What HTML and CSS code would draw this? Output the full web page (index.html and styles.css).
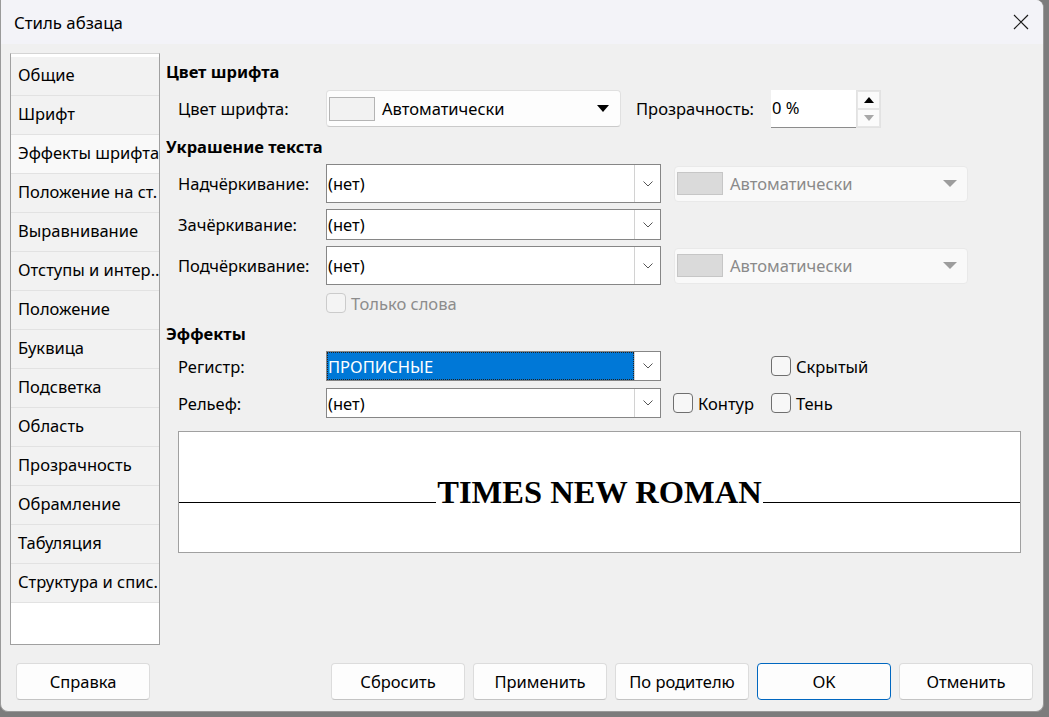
FILE: index.html
```html
<!DOCTYPE html>
<html lang="ru">
<head>
<meta charset="utf-8">
<title>Стиль абзаца</title>
<link rel="stylesheet" href="styles.css">
</head>
<body>
<div class="dialog">
  <div class="titlebar">
    <span class="title">Стиль абзаца</span>
    <svg class="close" width="16" height="16" viewBox="0 0 16 16"><path d="M1 1L15 15M15 1L1 15" stroke="#1a1a1a" stroke-width="1.2" fill="none"/></svg>
  </div>
  <div class="main">
    <div class="sidebar">
      <div class="tab">Общие</div>
      <div class="tab">Шрифт</div>
      <div class="tab active">Эффекты шрифта</div>
      <div class="tab">Положение на ст.</div>
      <div class="tab">Выравнивание</div>
      <div class="tab">Отступы и интер..</div>
      <div class="tab">Положение</div>
      <div class="tab">Буквица</div>
      <div class="tab">Подсветка</div>
      <div class="tab">Область</div>
      <div class="tab">Прозрачность</div>
      <div class="tab">Обрамление</div>
      <div class="tab">Табуляция</div>
      <div class="tab">Структура и спис.</div>
    </div>
    <div class="content">
      <div class="heading h1">Цвет шрифта</div>
      <div class="row r1">
        <span class="label">Цвет шрифта:</span>
        <div class="colorbox">
          <span class="swatch"></span>
          <span class="ctext">Автоматически</span>
          <span class="tri"></span>
        </div>
        <span class="label2">Прозрачность:</span>
        <div class="spin">
          <span class="spinval">0 %</span>
          <div class="spinbtns">
            <span class="sb up"><span class="tri-up"></span></span>
            <span class="sb down"><span class="tri-down"></span></span>
          </div>
        </div>
      </div>
      <div class="heading h2">Украшение текста</div>
      <div class="row r2">
        <span class="label">Надчёркивание:</span>
        <div class="combo"><span class="ctxt">(нет)</span><span class="cbtn"><svg width="10" height="6" viewBox="0 0 10 6"><path d="M0.5 0.5L5 5L9.5 0.5" stroke="#555" stroke-width="1" fill="none"/></svg></span></div>
        <div class="colorbox disabled">
          <span class="swatch"></span>
          <span class="ctext">Автоматически</span>
          <span class="tri"></span>
        </div>
      </div>
      <div class="row r3">
        <span class="label">Зачёркивание:</span>
        <div class="combo"><span class="ctxt">(нет)</span><span class="cbtn"><svg width="10" height="6" viewBox="0 0 10 6"><path d="M0.5 0.5L5 5L9.5 0.5" stroke="#555" stroke-width="1" fill="none"/></svg></span></div>
      </div>
      <div class="row r4">
        <span class="label">Подчёркивание:</span>
        <div class="combo"><span class="ctxt">(нет)</span><span class="cbtn"><svg width="10" height="6" viewBox="0 0 10 6"><path d="M0.5 0.5L5 5L9.5 0.5" stroke="#555" stroke-width="1" fill="none"/></svg></span></div>
        <div class="colorbox disabled">
          <span class="swatch"></span>
          <span class="ctext">Автоматически</span>
          <span class="tri"></span>
        </div>
      </div>
      <div class="row r5">
        <span class="label"></span>
        <span class="check disabled"><span class="box"></span><span class="ctl">Только слова</span></span>
      </div>
      <div class="heading h3">Эффекты</div>
      <div class="row r6">
        <span class="label">Регистр:</span>
        <div class="combo sel"><span class="ctxt">ПРОПИСНЫЕ</span><span class="cbtn"><svg width="10" height="6" viewBox="0 0 10 6"><path d="M0.5 0.5L5 5L9.5 0.5" stroke="#555" stroke-width="1" fill="none"/></svg></span></div>
        <span class="spacer1"></span>
        <span class="check"><span class="box"></span><span class="ctl">Скрытый</span></span>
      </div>
      <div class="row r7">
        <span class="label">Рельеф:</span>
        <div class="combo"><span class="ctxt">(нет)</span><span class="cbtn"><svg width="10" height="6" viewBox="0 0 10 6"><path d="M0.5 0.5L5 5L9.5 0.5" stroke="#555" stroke-width="1" fill="none"/></svg></span></div>
        <span class="check kontur"><span class="box"></span><span class="ctl">Контур</span></span>
        <span class="check ten"><span class="box"></span><span class="ctl">Тень</span></span>
      </div>
      <div class="preview">
        <div class="prow">
          <span class="pline"></span>
          <span class="ptext">TIMES NEW ROMAN</span>
          <span class="pline"></span>
        </div>
      </div>
    </div>
  </div>
  <div class="buttons">
    <button class="btn">Справка</button>
    <span class="grow"></span>
    <button class="btn">Сбросить</button>
    <button class="btn">Применить</button>
    <button class="btn">По родителю</button>
    <button class="btn ok">OK</button>
    <button class="btn">Отменить</button>
  </div>
</div>
</body>
</html>
```

FILE: styles.css
```css
* { box-sizing: border-box; }
html, body { margin: 0; padding: 0; }
body {
  background: #7c7c7c;
  width: 1049px;
  height: 717px;
  overflow: hidden;
  font-family: "Noto Sans", "Open Sans", sans-serif;
  font-size: 16.5px;
  color: #000;
}
.dialog {
  width: 1044px;
  height: 712px;
  background: #f0f0f0;
  border: 1px solid #9a9a9a;
  border-top: none;
  border-radius: 0 8px 8px 8px;
  overflow: hidden;
  display: flex;
  flex-direction: column;
}
.titlebar {
  height: 44px;
  flex: none;
  background: #f3f3f8;
  display: flex;
  align-items: center;
  padding: 0 14px 0 13px;
}
.title { font-size: 16.8px; flex: 1; }
.main {
  display: flex;
  padding: 9px 0 0 9px;
  height: 601px;
  flex: none;
}
.sidebar {
  width: 150px;
  height: 592px;
  background: #fff;
  border: 1px solid #a0a0a0;
  border-top-color: #d4d4d4;
  padding-top: 3px;
  overflow: hidden;
  flex: none;
}
.tab {
  height: 39px;
  line-height: 36px;
  padding-left: 7px;
  background: #f2f2f2;
  border-bottom: 1px solid #e2e2e2;
  white-space: nowrap;
  overflow: hidden;
}
.tab.active { background: #f9f9f9; }
.content {
  margin-left: 6px;
  flex: 1;
  display: flex;
  flex-direction: column;
}
.heading {
  font-weight: bold;
  line-height: 20px;
  height: 20px;
}
.h1 { margin-top: 9px; }
.h2 { margin-top: 10px; }
.h3 { margin-top: 11px; }
.row {
  display: flex;
  align-items: center;
  padding-left: 12px;
}
.label { width: 148px; flex: none; white-space: nowrap; }
.r1 { margin-top: 8px; height: 37px; }
.r2 { margin-top: 7px; height: 39px; }
.r3 { margin-top: 6px; height: 31px; }
.r4 { margin-top: 6px; height: 39px; }
.r5 { margin-top: 8px; height: 20px; }
.r6 { margin-top: 7px; height: 30px; }
.r7 { margin-top: 7px; height: 30px; }
.colorbox {
  width: 295px;
  height: 37px;
  margin-left: 0;
  flex: none;
  background: #fdfdfd;
  border: 1px solid #e0e0e0;
  border-bottom-color: #cacaca;
  border-radius: 4px;
  display: flex;
  align-items: center;
  padding-left: 2px;
}
.colorbox .swatch {
  width: 46px;
  height: 24px;
  border: 1px solid #b4b4b4;
  background: #f2f2f2;
  flex: none;
}
.ctext { margin-left: 7px; flex: 1; white-space: nowrap; }
.tri {
  width: 0; height: 0;
  border-left: 6px solid transparent;
  border-right: 6px solid transparent;
  border-top: 7px solid #000;
  margin-right: 11px;
}
.colorbox.disabled {
  width: 294px;
  height: 36px;
  margin-left: 13px;
  background: #f9f9f9;
  border-color: #e9e9e9;
}
.colorbox.disabled .swatch { background: #dadada; border-color: #c6c6c6; height: 23px; }
.colorbox.disabled .ctext { color: #8a8a8a; }
.colorbox.disabled .tri { border-top-color: #9d9d9d; border-left-width: 7px; border-right-width: 7px; margin-right: 10px; }
.label2 { margin-left: 15px; width: 135px; flex: none; white-space: nowrap; }
.spin {
  display: flex;
  height: 38px;
  width: 110px;
  flex: none;
}
.spinval {
  width: 85px;
  background: #fff;
  border-bottom: 1px solid #8c8c8c;
  padding-left: 1px;
  line-height: 36px;
}
.spinbtns {
  width: 25px;
  display: flex;
  flex-direction: column;
  border: 1px solid #e2e2e2;
  background: #f0f0f0;
}
.sb {
  flex: 1;
  display: flex;
  align-items: center;
  justify-content: center;
  background: #fbfbfb;
  border: 1px solid #e6e6e6;
}
.tri-up { width: 0; height: 0; border-left: 5px solid transparent; border-right: 5px solid transparent; border-bottom: 6px solid #000; }
.tri-down { width: 0; height: 0; border-left: 5px solid transparent; border-right: 5px solid transparent; border-top: 6px solid #a8a8a8; }
.combo {
  width: 335px;
  flex: none;
  height: 100%;
  background: #fff;
  border: 1px solid #868686;
  display: flex;
  align-items: stretch;
}
.ctxt {
  flex: 1;
  display: flex;
  align-items: center;
  padding-left: 1px;
}
.cbtn {
  width: 26px;
  border-left: 1px solid #d2d2d2;
  display: flex;
  align-items: center;
  justify-content: center;
  background: #fff;
}
.combo.sel .ctxt {
  background: #0078d7;
  color: #fff;
  outline: 1px dotted #222;
  outline-offset: -1px;
}
.check { display: flex; align-items: center; white-space: nowrap; }
.check .box {
  width: 20px;
  height: 20px;
  border: 1px solid #6f6f6f;
  border-radius: 4px;
  background: #f7f7f7;
  margin-right: 5px;
  flex: none;
}
.check.disabled .box { border-color: #cbcbcb; background: #f4f4f4; }
.check.disabled .ctl { color: #8c8c8c; }
.spacer1 { width: 110px; flex: none; }
.kontur { margin-left: 12px; width: 98px; flex: none; }
.preview {
  margin-top: 13px;
  margin-left: 12px;
  width: 843px;
  height: 122px;
  background: #fff;
  border: 1px solid #a0a0a0;
  padding-top: 44px;
}
.prow {
  display: flex;
  align-items: flex-end;
}
.pline {
  flex: 1;
  height: 1px;
  background: #000;
  margin-bottom: 5px;
}
.ptext {
  font-family: "Liberation Serif", "Times New Roman", serif;
  font-weight: bold;
  font-size: 32.5px;
  line-height: 32px;
  padding: 0 1px;
}
.buttons {
  display: flex;
  padding: 18px 10px 0 15px;
  gap: 8px;
}
.grow { flex: 1; }
.btn {
  width: 134px;
  height: 37px;
  font-family: inherit;
  font-size: 16.5px;
  color: #000;
  background: #fdfdfd;
  border: 1px solid #dcdcdc;
  border-bottom-color: #c4c4c4;
  border-radius: 4px;
  padding: 0;
}
.btn.ok { border: 1px solid #0067c0; }
```
